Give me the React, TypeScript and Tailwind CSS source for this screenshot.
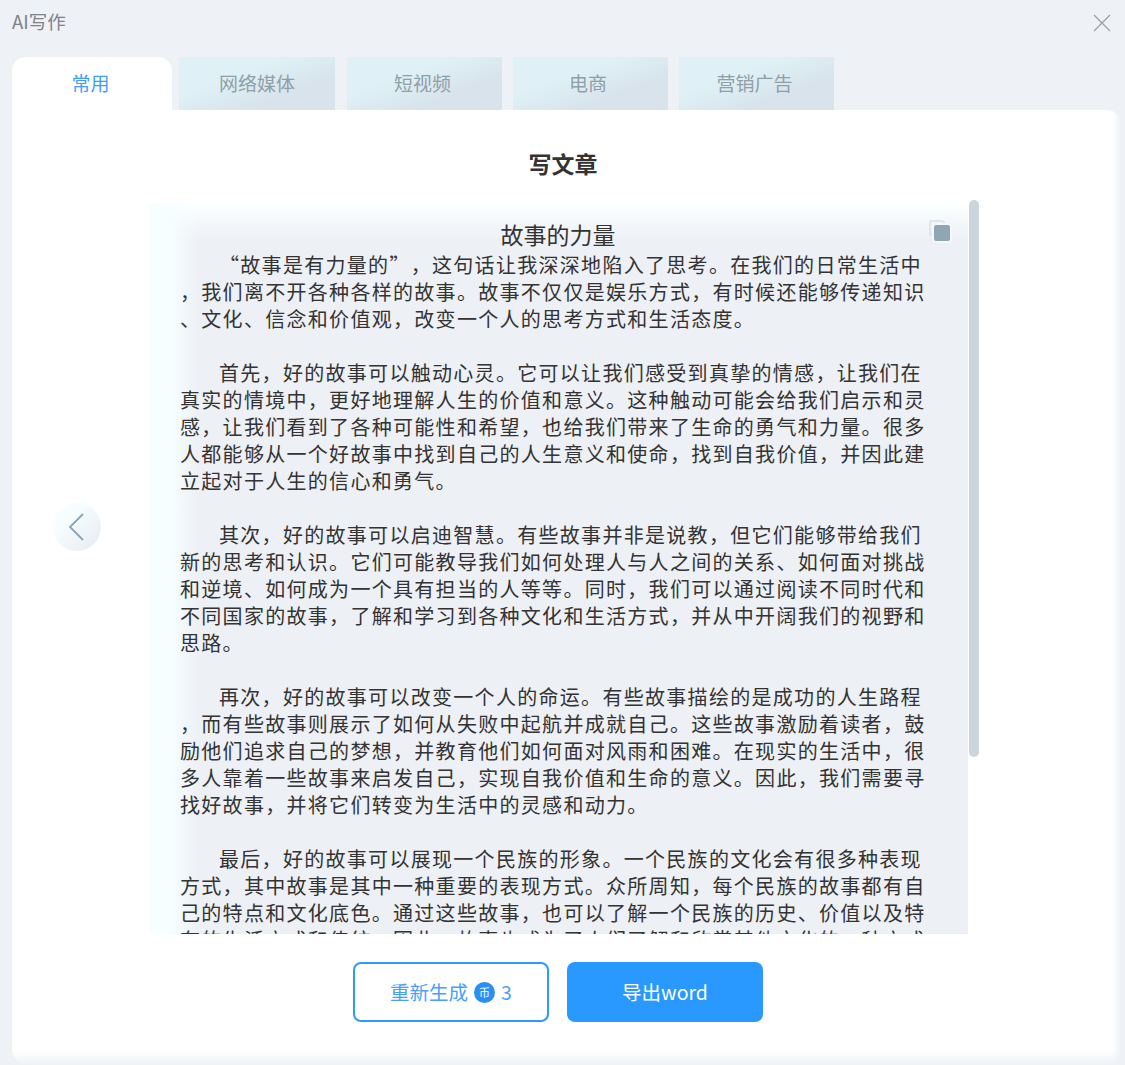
import React from "react";

const paragraphs: string[][] = [
  [
    "“故事是有力量的”|，这句话让我深深地陷入了思考。在我们的日常生活中",
    "，我们离不开各种各样的故事。故事不仅仅是娱乐方式，有时候还能够传递知识",
    "、文化、信念和价值观，改变一个人的思考方式和生活态度。",
  ],
  [
    "首先，好的故事可以触动心灵。它可以让我们感受到真挚的情感，让我们在",
    "真实的情境中，更好地理解人生的价值和意义。这种触动可能会给我们启示和灵",
    "感，让我们看到了各种可能性和希望，也给我们带来了生命的勇气和力量。很多",
    "人都能够从一个好故事中找到自己的人生意义和使命，找到自我价值，并因此建",
    "立起对于人生的信心和勇气。",
  ],
  [
    "其次，好的故事可以启迪智慧。有些故事并非是说教，但它们能够带给我们",
    "新的思考和认识。它们可能教导我们如何处理人与人之间的关系、如何面对挑战",
    "和逆境、如何成为一个具有担当的人等等。同时，我们可以通过阅读不同时代和",
    "不同国家的故事，了解和学习到各种文化和生活方式，并从中开阔我们的视野和",
    "思路。",
  ],
  [
    "再次，好的故事可以改变一个人的命运。有些故事描绘的是成功的人生路程",
    "，而有些故事则展示了如何从失败中起航并成就自己。这些故事激励着读者，鼓",
    "励他们追求自己的梦想，并教育他们如何面对风雨和困难。在现实的生活中，很",
    "多人靠着一些故事来启发自己，实现自我价值和生命的意义。因此，我们需要寻",
    "找好故事，并将它们转变为生活中的灵感和动力。",
  ],
  [
    "最后，好的故事可以展现一个民族的形象。一个民族的文化会有很多种表现",
    "方式，其中故事是其中一种重要的表现方式。众所周知，每个民族的故事都有自",
    "己的特点和文化底色。通过这些故事，也可以了解一个民族的历史、价值以及特",
    "有的生活方式和传统。因此，故事也成为了人们了解和欣赏其他文化的一种方式",
  ],
];

const tabs = [
  { label: "网络媒体", cls: "w-[156px] ml-[7px]" },
  { label: "短视频", cls: "w-[155px] ml-[12px] pr-[4px]" },
  { label: "电商", cls: "w-[155px] ml-[11px] pr-[5px]" },
  { label: "营销广告", cls: "w-[155px] ml-[11px] pr-[4px]" },
];

export default function App() {
  return (
    <div className="flex h-[1065px] w-[1125px] flex-col overflow-hidden bg-[#eef1f6] pr-[4px] pl-[12px] font-['Noto_Sans_CJK_SC','Noto_Sans',sans-serif]">
      <div className="flex h-[57px] shrink-0 items-start justify-between">
        <span className="mt-[8px] text-[18.5px] leading-[26px] text-[#7d8388]">AI写作</span>
        <svg className="mt-[13px] mr-[9px]" width="20" height="20" viewBox="0 0 20 20" fill="none" stroke="#999fa3" strokeWidth="1.2">
          <path d="M2 2 L18 18 M18 2 L2 18" />
        </svg>
      </div>

      <div className="flex h-[53px] shrink-0">
        <div className="flex w-[160px] items-center justify-center rounded-t-[14px] bg-white pr-[3px] text-[19px] text-[#3f9dfb]">常用</div>
        {tabs.map((t) => (
          <div
            key={t.label}
            className={`flex items-center justify-center bg-[linear-gradient(160deg,#dff1f6_35%,#d8e3ec_70%)] text-[19px] text-[#8f9fa8] ${t.cls}`}
          >
            {t.label}
          </div>
        ))}
      </div>

      <div className="flex min-h-0 flex-1 flex-col rounded-tr-[14px] rounded-bl-[16px] bg-[linear-gradient(180deg,transparent_calc(100%-15px),#eef1f6_100%),linear-gradient(90deg,#ffffff_calc(100%-9px),#eef1f6_100%)]">
        <h1 className="mt-[36px] h-[34px] shrink-0 pr-[7px] text-center text-[23px] leading-[34px] font-bold text-[#333333]">写文章</h1>

        <div className="mt-[20px] flex h-[734px] shrink-0 items-start">
          <div className="mt-[303px] ml-[41px] flex h-[48px] w-[48px] shrink-0 items-center justify-center rounded-full bg-[linear-gradient(135deg,#f6fefe_30%,#e9edf2_90%)]">
            <svg width="20" height="30" viewBox="0 0 20 30" fill="none" stroke="#8ba4b3" strokeWidth="1.8">
              <path d="M16 2 L3 15 L16 28" />
            </svg>
          </div>

          <div className="relative mt-[3px] ml-[49px] h-[731px] w-[818px] shrink-0 overflow-hidden bg-[linear-gradient(90deg,#f6feff_0%,#f6feff_2.5%,transparent_6%),linear-gradient(180deg,#fbffff_0%,#fbffff_0.5%,transparent_5%),linear-gradient(#edf0f5,#edf0f5)] pl-[30px] text-[#333333]">
            <div className="absolute top-[17px] right-[23px] h-[16px] w-[16px] rounded-[3px] border-2 border-[#dde6eb]" />
            <div className="absolute top-[22px] right-[18px] h-[16px] w-[16px] rounded-[2px] bg-[#8fa6b3] ring-2 ring-[#f4f8fa]" />
            <div className="mt-[14px] h-[34px] w-[756px] text-center text-[23px] leading-[34px]">故事的力量</div>
            <div className="flex flex-col gap-[27px]">
              {paragraphs.map((lines, i) => (
                <div key={i}>
                  {lines.map((line, j) => {
                    const [head, tail] = line.split("|");
                    return (
                      <div
                        key={j}
                        className={`h-[27px] text-[20px] leading-[27px] tracking-[1.3px] whitespace-nowrap ${j === 0 ? "pl-[39px]" : ""}`}
                      >
                        {head}
                        {tail !== undefined && <span className="ml-[10px]">{tail}</span>}
                      </div>
                    );
                  })}
                </div>
              ))}
            </div>
          </div>

          <div className="mt-0 ml-[1px] h-[557px] w-[10px] shrink-0 rounded-full bg-[#cbd5de]" />
        </div>

        <div className="mt-[28px] flex justify-center gap-[18px] pr-[17px]">
          <button className="flex h-[60px] w-[196px] items-center justify-center gap-[6px] rounded-[8px] border-2 border-[#2b9bff] bg-white text-[19.5px] text-[#4a9ffb]">
            <span>重新生成</span>
            <span className="flex h-[21px] w-[21px] items-center justify-center rounded-full bg-[#2a8ff0] text-[11px] text-white">币</span>
            <span>3</span>
          </button>
          <button className="flex h-[60px] w-[196px] items-center justify-center rounded-[8px] bg-[#2999ff] text-[19.5px] text-white">导出word</button>
        </div>
      </div>
    </div>
  );
}
